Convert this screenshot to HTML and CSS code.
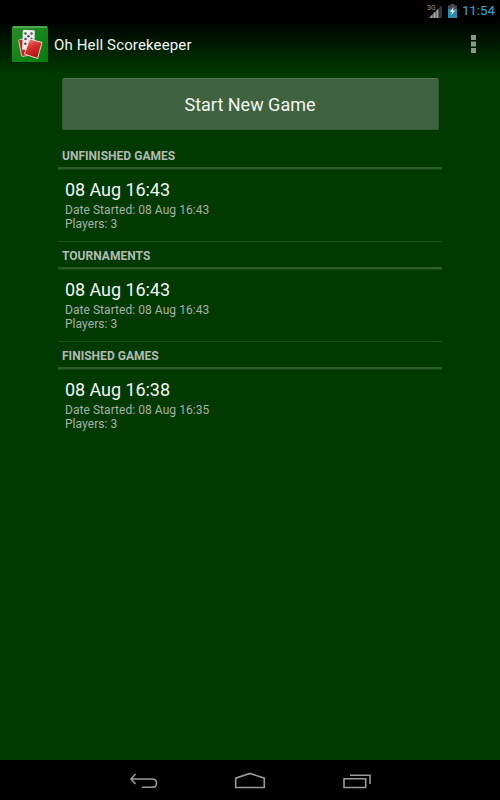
FILE: index.html
```html
<!DOCTYPE html>
<html lang="en">
<head>
	<meta charset="UTF-8">
	<title>Oh Hell Scorekeeper</title>
	<link rel="stylesheet" href="styles.css">
</head>
<body>
	<div class="status-bar">
		<svg class="signal" width="16" height="16" viewBox="0 0 16 16">
			<path d="M15 2V15H2z" fill="#353535"/>
			<path d="M10.500 6.500V15H2z" fill="#666"/>
			<path d="M4.500 15v-2.500M7.500 15V9.500M10.500 15V6.500" stroke="#aaa" stroke-width="1.500"/>
			<text x="0" y="6.500" class="network">3G</text>
		</svg>
		<svg class="battery" width="9" height="14" viewBox="0 0 9 14">
			<path d="M2.500 0h4v1.500H9V14H0V1.500h2.500z" fill="#454b50"/>
			<path d="M0 5h9v9H0z" fill="#2b8db0"/>
			<path d="M5.800 3L2 7.500l2.300.5L3 11.200l4-4.400-2.200-.6z" fill="#fff"/>
		</svg>
		<span class="clock">11:54</span>
	</div>
	<header>
		<svg class="logo" width="36" height="36" viewBox="0 0 36 36">
			<defs>
				<linearGradient id="felt" x1="0" y1="0" x2="1" y2="1">
					<stop offset="0" stop-color="#2b8b2b"/>
					<stop offset=".5" stop-color="#15851a"/>
					<stop offset="1" stop-color="#047d08"/>
				</linearGradient>
				<linearGradient id="cardBack" x1="0" y1="0" x2=".4" y2="1">
					<stop offset="0" stop-color="#f29a92"/>
					<stop offset=".45" stop-color="#d93630"/>
					<stop offset="1" stop-color="#b90f13"/>
				</linearGradient>
			</defs>
			<rect width="36" height="36" rx="1.500" fill="url(#felt)"/>
			<path d="M1 1.200h34" stroke="#70b96c" stroke-width="1.200"/>
			<rect x="8" y="13" width="9" height="17" rx="1" transform="rotate(-11 12 21)" fill="#c8221f" stroke="#efdcd8" stroke-width=".8"/>
			<rect x="10.500" y="4" width="12" height="20" rx="1" transform="rotate(2 16 14)" fill="#eee"/>
			<g class="pips">
				<circle cx="13.500" cy="7.500" r="1.300"/>
				<circle cx="19.500" cy="7.500" r="1.300"/>
				<circle cx="16.500" cy="10.300" r="1.300"/>
				<circle cx="13.500" cy="13" r="1.300"/>
				<circle cx="19.500" cy="12.500" r="1"/>
				<circle cx="13.300" cy="17.800" r="1.300"/>
			</g>
			<path d="M17.500 13L30 16.500 25.500 32.500 12.500 28z" fill="url(#cardBack)" stroke="#f0d8d5" stroke-width="1" stroke-linejoin="round"/>
		</svg>
		<h1>Oh Hell Scorekeeper</h1>
		<svg class="overflow" width="5" height="18" viewBox="0 0 5 18">
			<path d="M0 0h5v5H0zM0 6.500h5v5H0zM0 13h5v5H0z" fill="#8b988b"/>
		</svg>
	</header>
	<main>
		<button class="new-game">Start New Game</button>
		<section>
			<h2>UNFINISHED GAMES</h2>
			<article class="game">
				<h3>08 Aug 16:43</h3>
				<p>Date Started: 08 Aug 16:43</p>
				<p>Players: 3</p>
			</article>
		</section>
		<section>
			<h2>TOURNAMENTS</h2>
			<article class="game">
				<h3>08 Aug 16:43</h3>
				<p>Date Started: 08 Aug 16:43</p>
				<p>Players: 3</p>
			</article>
		</section>
		<section>
			<h2>FINISHED GAMES</h2>
			<article class="game">
				<h3>08 Aug 16:38</h3>
				<p>Date Started: 08 Aug 16:35</p>
				<p>Players: 3</p>
			</article>
		</section>
	</main>
	<nav class="nav-bar">
		<svg width="30" height="18" viewBox="0 0 30 18">
			<path d="M7.500 2L3 7l4.500 5M3.500 7H24Q28.500 7 28.500 11.200T24 15.300H14"/>
		</svg>
		<svg width="32" height="18" viewBox="0 0 32 18">
			<path d="M1.700 15.500V6.200L16 1.400 30.300 6.200V15.500z"/>
		</svg>
		<svg width="30" height="18" viewBox="0 0 30 18">
			<path d="M2 6.700H23.700V15.500H2zM8 3.200H28V12"/>
		</svg>
	</nav>
</body>
</html>
```
FILE: styles.css
```css
* {margin:0px;padding:0px;box-sizing:border-box;}
body {display:flex;flex-flow:column nowrap;height:100vh;overflow:hidden;font-family:Roboto,sans-serif;color:#f4f4f4;background:linear-gradient(#000 0px,#000 20px,#003a00 74px,#003a00 100%);}
svg {display:block;flex:none;}

.status-bar {flex:0 0 22px;display:flex;flex-flow:row nowrap;justify-content:flex-end;align-items:center;padding-right:5px;}
.signal {margin-right:5px;}
.network {font-size:7px;fill:#999;}
.battery {margin-right:5px;}
.clock {font-size:13.3px;line-height:22px;color:#33a9dc;}

header {flex:0 0 44px;display:flex;flex-flow:row nowrap;align-items:center;padding:0px 24px 0px 12px;}
h1 {flex:1;margin-left:6px;padding-top:2px;font-size:15px;font-weight:400;line-height:20px;letter-spacing:0.14px;}
.pips {fill:#555;}

main {flex:1;width:384px;margin:0px auto;padding-top:12px;}
.new-game {display:block;width:377px;height:52px;margin:0px auto 12px;padding-top:1px;font:400 18px Roboto,sans-serif;color:#f4f4f4;background-color:#3e633e;border:1px solid #345a34;border-top-color:#547654;border-radius:2px;}
h2 {height:27px;padding-left:4px;font-size:12px;font-weight:700;line-height:28px;color:#b5b9b5;letter-spacing:0.03px;box-shadow:0px 1px #174a17;border-bottom:2px solid #2d5d2d;}
.game {height:73px;padding:10px 7px 0px;border-bottom:1px solid #1f4f1f;}
section:last-child .game {border-bottom:none;}
h3 {font-size:18px;font-weight:400;line-height:22px;letter-spacing:-0.06px;}
.game p {font-size:12px;line-height:14px;color:#a9b0a9;letter-spacing:0.05px;}
.game h3 + p {margin-top:2px;}

.nav-bar {flex:0 0 40px;display:flex;flex-flow:row nowrap;justify-content:center;gap:76px;padding-top:12px;background-color:#000;}
.nav-bar path {fill:none;stroke:#999;stroke-width:1.600;}
```
